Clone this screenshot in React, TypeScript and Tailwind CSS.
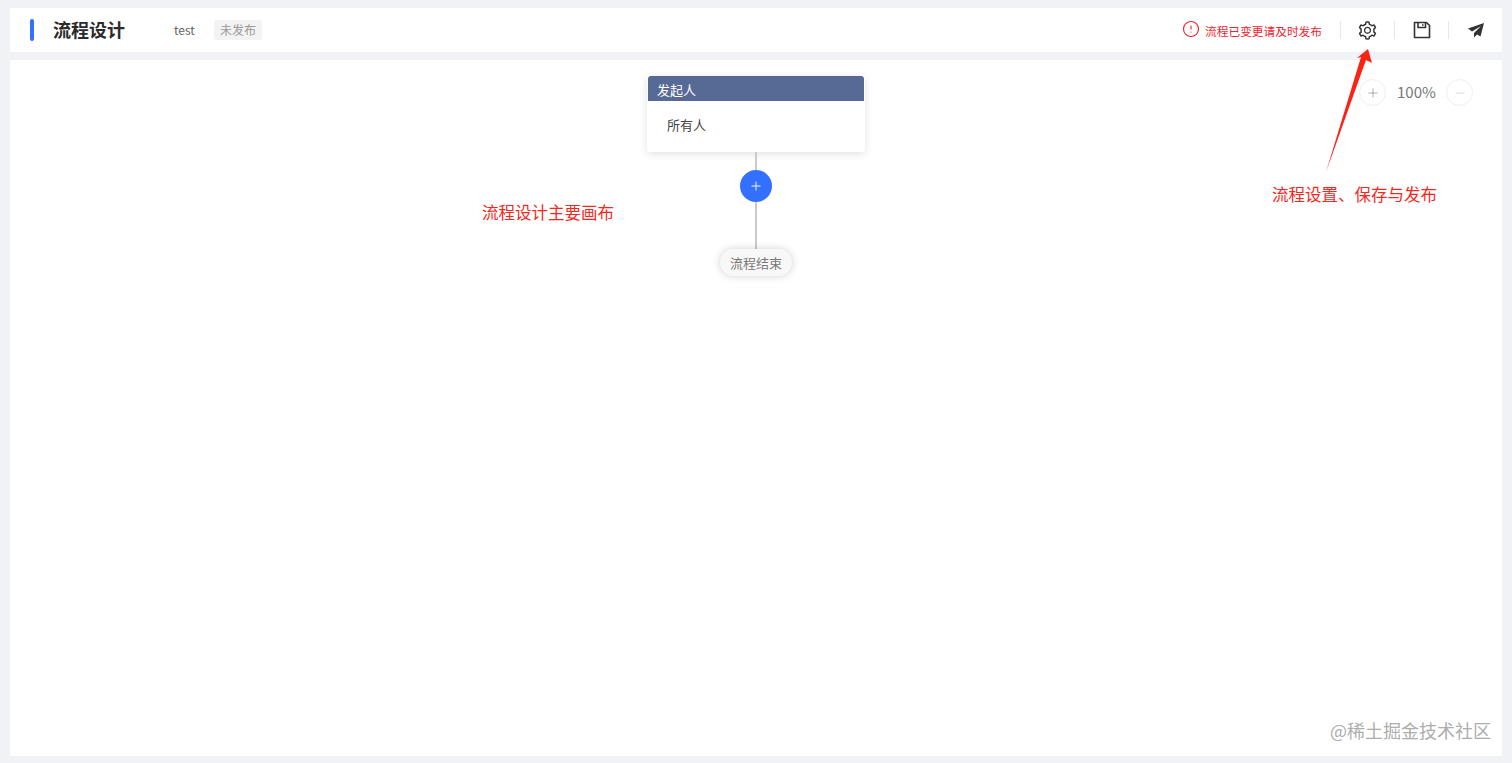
import { AlertCircle, Minus, Plus } from 'lucide-react';
import { AiOutlineSetting } from 'react-icons/ai';

const CJK = "font-['Noto_Sans_CJK_SC','Noto_Sans',sans-serif]";

function ToolButton({ children }: { children: React.ReactNode }) {
  return <div className="flex h-[18px] w-[54px] items-center justify-center border-l border-[#e8e8e8] text-[#333]">{children}</div>;
}

function SaveIcon() {
  return (
    <svg width="18" height="18" viewBox="0 0 18 18" fill="none" stroke="#333" strokeWidth="1.6">
      <path d="M1.5 1.5h12l3 3v12h-15z" strokeLinejoin="round" />
      <path d="M5 1.5v5h7.5v-5M9.8 3.2v1.6" />
    </svg>
  );
}

function PlaneIcon() {
  return (
    <svg width="18" height="16" viewBox="0 0 18 16" fill="#333">
      <path d="M17 1 L1 6.5 L5 9.5 L14 4 L7 11 L7 15.5 L10 12.5 L13.5 14.5 Z" />
    </svg>
  );
}

function Header() {
  return (
    <header className="flex h-[44px] items-center rounded-[2px] bg-white pl-5">
      <div className="h-[22px] w-[4px] rounded-full bg-[#3370ff]" />
      <h1 className="mb-px ml-[19px] text-[18px] font-bold text-[#2b2b2b]">流程设计</h1>
      <span className="ml-[49px] text-[12px] text-[#666]">test</span>
      <span className="ml-[19px] rounded-[3px] bg-[#f3f3f3] px-[6px] py-[2px] text-[12px] leading-[16px] text-[#999]">未发布</span>
      <div className="ml-auto flex items-center">
        <AlertCircle size={18} strokeWidth={1.5} className="mb-[3px] text-[#f5222d]" />
        <span className="ml-[5px] mr-[18px] mt-[2px] text-[11.7px] text-[#f5222d]">流程已变更请及时发布</span>
        <ToolButton><AiOutlineSetting size={21} /></ToolButton>
        <ToolButton><SaveIcon /></ToolButton>
        <ToolButton><PlaneIcon /></ToolButton>
      </div>
    </header>
  );
}

function ZoomControl() {
  return (
    <div className="absolute right-[29px] top-[19px] flex items-center gap-[11px] text-[#777]">
      <div className="flex h-[27px] w-[27px] items-center justify-center rounded-full border border-[#eee]"><Plus size={14} strokeWidth={1} /></div>
      <span className="w-[38px] text-center text-[15px]">100%</span>
      <div className="flex h-[27px] w-[27px] items-center justify-center rounded-full border border-[#eee] text-[#bbb]"><Minus size={14} strokeWidth={1} /></div>
    </div>
  );
}

function FlowCanvas() {
  return (
    <div className="flex flex-col items-center pt-[16px]">
      <div className="w-[218px] rounded-[3px] bg-white shadow-[0_2px_8px_rgba(0,0,0,0.12)]">
        <div className="mx-px h-[25px] rounded-t-[3px] bg-[#576a95] pl-[9px] text-[13px] leading-[28px] text-white">发起人</div>
        <div className="h-[51px] pl-5 pt-[14px] text-[13px] leading-[20px] text-[#444]">所有人</div>
      </div>
      <div className="h-[18px] w-[2px] bg-[#cacaca]" />
      <div className="flex h-8 w-8 items-center justify-center rounded-full bg-[#3370ff] text-white"><Plus size={14} strokeWidth={1.6} /></div>
      <div className="h-[47px] w-[2px] bg-[#cacaca]" />
      <div className="flex h-[27px] w-[72px] items-center justify-center rounded-[14px] bg-[#f8f8f8] text-[13px] text-[#777] shadow-[0_0_8px_rgba(0,0,0,0.18)]">流程结束</div>
    </div>
  );
}

function Annotations() {
  return (
    <>
      <span className="absolute left-[472px] top-[141px] text-[16.5px] leading-[22px] text-[#f5281e]">流程设计主要画布</span>
      <span className="absolute left-[1262px] top-[123px] text-[16.5px] leading-[22px] text-[#f5281e]">流程设置、保存与发布</span>
      <svg className="absolute left-[1310px] top-[-20px]" width="60" height="135" viewBox="0 0 60 135">
        <path d="M6 132 L41 17 L37 18 L48 9 L52 23 L46 20 Z" fill="#fb2315" />
      </svg>
    </>
  );
}

export default function App() {
  return (
    <div className={`flex h-[763px] w-[1512px] flex-col gap-2 overflow-hidden bg-[#f0f2f5] px-[10px] pb-[7px] pt-2 ${CJK}`}>
      <Header />
      <main className="relative flex-1 rounded-[2px] bg-white">
        <FlowCanvas />
        <ZoomControl />
        <Annotations />
        <span className="absolute bottom-[14px] right-[11px] text-[18px] leading-[24px] text-[#adadad]">@稀土掘金技术社区</span>
      </main>
    </div>
  );
}
